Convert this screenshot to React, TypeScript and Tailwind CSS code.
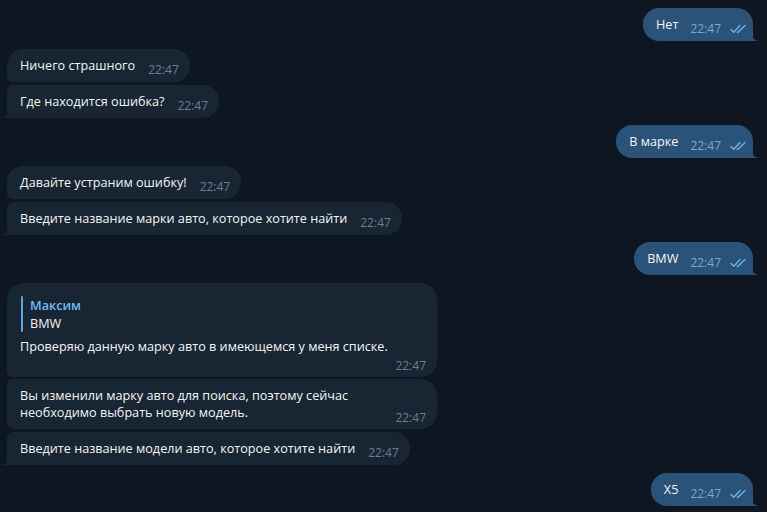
import React from 'react';

type Pos = 'first' | 'middle' | 'last';

function Checks() {
  return (
    <svg width="17" height="10" viewBox="0 0 17 10" className="relative top-[4px] ml-[9px] shrink-0">
      <path d="M1 5.5 L3.8 8.3 L10 1.6" fill="none" stroke="#6ab3f3" strokeWidth="1.4" strokeLinecap="round" strokeLinejoin="round" />
      <path d="M7.2 8.3 L8 8.3 L15 1.6" fill="none" stroke="#6ab3f3" strokeWidth="1.4" strokeLinecap="round" strokeLinejoin="round" />
    </svg>
  );
}

function TailLeft() {
  return (
    <svg width="8" height="8" viewBox="0 0 8 8" className="absolute bottom-0 -left-[7px]">
      <path d="M8 0 Q8 8 0 8 H8 Z" fill="#182533" />
    </svg>
  );
}

function TailRight() {
  return (
    <svg width="8" height="8" viewBox="0 0 8 8" className="absolute bottom-0 -right-[7px]">
      <path d="M0 0 Q0 8 8 8 H0 Z" fill="#2b5278" />
    </svg>
  );
}

const corners: Record<Pos, string> = {
  first: 'rounded-tl-[16px] rounded-tr-[16px] rounded-br-[16px] rounded-bl-[6px]',
  middle: 'rounded-tl-[6px] rounded-tr-[16px] rounded-br-[16px] rounded-bl-[6px]',
  last: 'rounded-tl-[6px] rounded-tr-[16px] rounded-br-[16px] rounded-bl-none',
};

function In({ text, pos }: { text: string; pos: Pos }) {
  return (
    <div className={`relative self-start h-[33px] bg-[#182533] ${corners[pos]} pl-[13px] pr-[11px] flex items-center`}>
      <span className="text-[12.65px] leading-[17px] text-[#f5f5f5] whitespace-nowrap">{text}</span>
      <span className="relative top-[4px] ml-[13px] text-[12px] leading-[14px] text-[#6d7f8f]">22:47</span>
      {pos === 'last' && <TailLeft />}
    </div>
  );
}

function Out({ text }: { text: string }) {
  return (
    <div className="relative self-end h-[33px] mr-[14px] bg-[#2b5278] rounded-tl-[16px] rounded-tr-[16px] rounded-bl-[16px] rounded-br-none pl-[13px] pr-[6px] flex items-center">
      <span className="text-[12.65px] leading-[17px] text-[#f5f5f5] whitespace-nowrap">{text}</span>
      <span className="relative top-[4px] ml-[12px] text-[12px] leading-[14px] text-[#7da8d3]">22:47</span>
      <Checks />
      <TailRight />
    </div>
  );
}

export default function App() {
  return (
    <div
      className="w-[767px] h-[512px] overflow-hidden bg-[#0e1621] pl-[7px] pt-[8px] flex flex-col"
      style={{ fontFamily: '"Open Sans", "Noto Sans", sans-serif' }}
    >
      <Out text="Нет" />

      <div className="mt-[8px] flex flex-col gap-[3px]">
        <In text="Ничего страшного" pos="first" />
        <In text="Где находится ошибка?" pos="last" />
      </div>

      <div className="mt-[7px] flex flex-col">
        <Out text="В марке" />
      </div>

      <div className="mt-[8px] flex flex-col gap-[3px]">
        <In text="Давайте устраним ошибку!" pos="first" />
        <In text="Введите название марки авто, которое хотите найти" pos="last" />
      </div>

      <div className="mt-[7px] flex flex-col">
        <Out text="BMW" />
      </div>

      <div className="mt-[8px] flex flex-col">
        {/* reply bubble */}
        <div className={`relative self-start w-[430px] h-[94px] bg-[#182533] ${corners.first} pl-[13px] pr-[11px] pt-[13px] flex flex-col`}>
          <div className="flex">
            <div className="w-[2px] bg-[#5fa3de] rounded-full ml-[1px]" />
            <div className="pl-[7px] flex flex-col">
              <span className="text-[12.65px] leading-[18px] font-semibold text-[#71baf5]">Максим</span>
              <span className="text-[12.65px] leading-[18px] text-[#f5f5f5]">BMW</span>
            </div>
          </div>
          <span className="mt-[6px] text-[12.65px] leading-[17px] text-[#f5f5f5]">
            Проверяю данную марку авто в имеющемся у меня списке.
          </span>
          <span className="self-end mt-[4px] text-[12px] leading-[14px] text-[#6d7f8f]">22:47</span>
        </div>

        <div className={`relative self-start mt-[2px] w-[430px] h-[50px] bg-[#182533] ${corners.middle} pl-[13px] pr-[11px] pb-[8px] flex items-end`}>
          <span className="text-[12.65px] leading-[17px] text-[#f5f5f5]">
            Вы изменили марку авто для поиска, поэтому сейчас
            <br />
            необходимо выбрать новую модель.
          </span>
          <span className="relative top-[4px] ml-auto text-[12px] leading-[14px] text-[#6d7f8f]">22:47</span>
        </div>

        <div className="mt-[3px] flex flex-col">
          <In text="Введите название модели авто, которое хотите найти" pos="last" />
        </div>
      </div>

      <div className="mt-[8px] flex flex-col">
        <Out text="X5" />
      </div>
    </div>
  );
}
